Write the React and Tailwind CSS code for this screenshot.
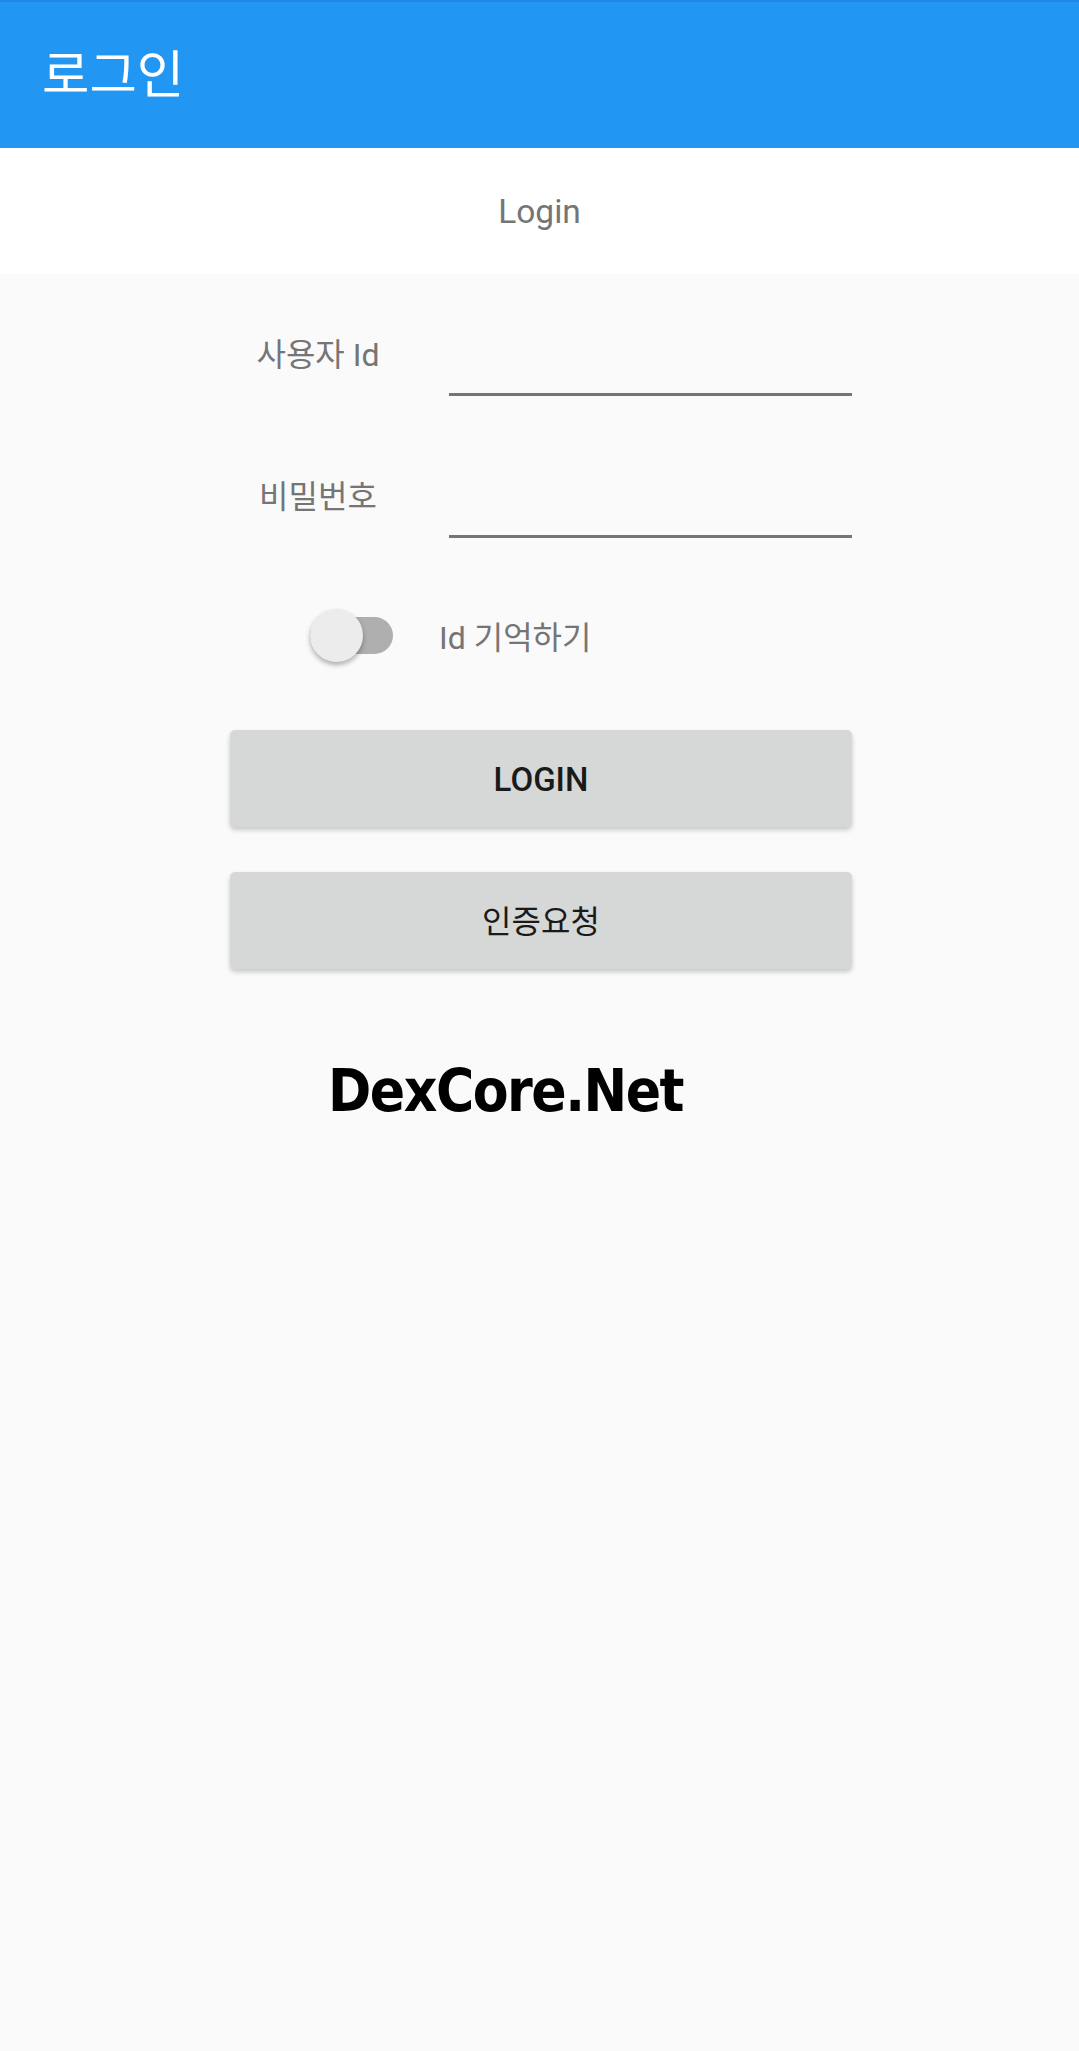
const stack = { fontFamily: 'Roboto, "Noto Sans CJK KR", sans-serif' }

function Field({ label, className }) {
  return (
    <div className={`flex h-[122px] items-start ${className}`}>
      <span className="mt-[59px] w-[176px] text-center text-[32px] leading-[44px] text-[#757575]">{label}</span>
      <div className="ml-[43px] h-full w-[403px] border-b-[3px] border-[#757575]" />
    </div>
  )
}

function Button({ label, className }) {
  return (
    <button className={`flex h-[97px] w-[622px] items-center justify-center rounded-[5px] bg-[#d6d7d7] pt-[2px] text-[#1a1a1a] shadow-[0_3px_5px_rgba(0,0,0,0.2)] ${className}`}>
      {label}
    </button>
  )
}

export default function App() {
  return (
    <div className="flex min-h-[2051px] w-full flex-col bg-[#fafafa]" style={stack}>
      <header className="flex h-[148px] items-center border-t-[2px] border-[#1e88e5] bg-[#2196f3] pl-[42px] pt-[2px] text-white">
        <h1 className="text-[51.5px] leading-none">로그인</h1>
      </header>
      <div className="flex h-[126px] items-center justify-center bg-white pt-[3px] text-[33.5px] text-[#757575]">Login</div>
      <main className="pl-[230px]">
        <Field label="사용자 Id" />
        <Field label="비밀번호" className="mt-[20px]" />
        <div className="mt-[71px] flex h-[53px] items-center">
          <div className="relative ml-[80px] h-[37px] w-[83px] rounded-full bg-[#afafaf]">
            <span className="absolute left-0 top-[-8px] h-[53px] w-[53px] rounded-full bg-[#ececec] shadow-[0_3px_5px_rgba(0,0,0,0.3)]" />
          </div>
          <span className="ml-[46px] pt-[4px] text-[32px] text-[#757575]">Id 기억하기</span>
        </div>
        <div className="mt-[68px] flex flex-col gap-[45px]">
          <Button label="LOGIN" className="text-[33px] font-medium" />
          <Button label="인증요청" className="text-[32px]" />
        </div>
        <p
          className="ml-[98px] mt-[82px] text-[58px] font-bold leading-[80px] tracking-[-1.5px] text-black"
          style={{ fontFamily: '"DejaVu Sans", sans-serif', fontStretch: 'condensed' }}
        >
          DexCore.Net
        </p>
      </main>
    </div>
  )
}
